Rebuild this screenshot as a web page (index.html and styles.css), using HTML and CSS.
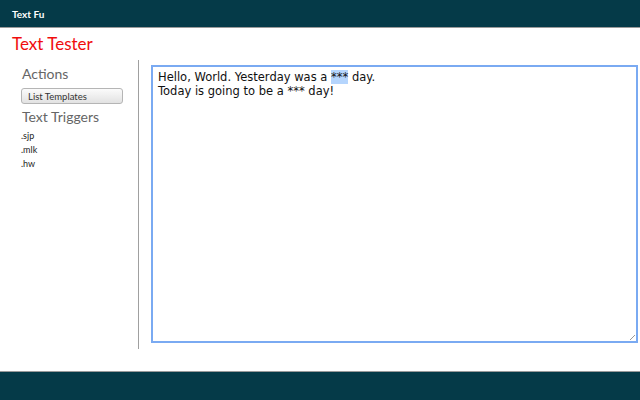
FILE: index.html
```html
<!DOCTYPE html>
<html>
<head>
<meta charset="utf-8">
<title>Text Fu</title>
<link rel="stylesheet" href="styles.css">
</head>
<body>
<div class="page">
  <header class="topbar"><span class="brand">Text Fu</span></header>
  <h1 class="title">Text Tester</h1>
  <div class="main">
    <aside class="sidebar">
      <h2 class="section">Actions</h2>
      <button class="btn">List Templates</button>
      <h2 class="section triggers">Text Triggers</h2>
      <ul class="trigger-list">
        <li>.sjp</li>
        <li>.mlk</li>
        <li>.hw</li>
      </ul>
    </aside>
    <div class="content">
      <div class="editor">Hello, World. Yesterday was a <span class="sel">***</span> day.<br>Today is going to be a *** day!<span class="grip"></span></div>
    </div>
  </div>
  <footer class="bottombar"></footer>
</div>
</body>
</html>
```

FILE: styles.css
```css
html, body {
  margin: 0;
  padding: 0;
  background: #fff;
}
.page {
  width: 640px;
  height: 400px;
  display: flex;
  flex-direction: column;
  overflow: hidden;
}
.topbar {
  height: 27px;
  background: #053a48;
  border-bottom: 1px solid #9a9a9a;
  display: flex;
  align-items: center;
  padding-left: 12px;
  box-sizing: content-box;
}
.brand {
  color: #fff;
  font-family: "Lato", "Open Sans", sans-serif;
  font-weight: bold;
  font-size: 10px;
}
.title {
  margin: 7px 0 0 12px;
  font-family: "Lato", "Open Sans", sans-serif;
  font-weight: normal;
  font-size: 17px;
  line-height: 18px;
  color: #f00d0d;
}
.main {
  flex: 1;
  display: flex;
  padding-top: 7px;
  padding-bottom: 22px;
}
.sidebar {
  width: 116px;
  padding-left: 22px;
  padding-top: 6px;
  border-right: 1px solid #a0a0a0;
  font-family: "Lato", "Open Sans", sans-serif;
}
.section {
  margin: 0;
  font-weight: normal;
  font-size: 14px;
  line-height: 16px;
  color: #666;
}
.triggers {
  margin-top: 5px;
}
.btn {
  display: block;
  margin: 6px 0 0 -1px;
  width: 102px;
  height: 16px;
  padding: 0 0 0 6px;
  text-align: left;
  font-family: "Lato", "Open Sans", sans-serif;
  font-size: 9.5px;
  color: #333;
  border: 1px solid #b5b5b5;
  border-radius: 3px;
  background: linear-gradient(#fbfbfb, #e2e2e2);
}
.trigger-list {
  list-style: none;
  margin: 4px 0 0 -1px;
  padding: 0;
  font-size: 9px;
  line-height: 14px;
  color: #222;
}
.content {
  flex: 1;
  padding: 5px 2px 6px 12px;
  display: flex;
}
.editor {
  position: relative;
  flex: 1;
  border: 2px solid #7aaaf2;
  padding: 3px 5px;
  font-family: "DejaVu Sans", sans-serif;
  font-size: 11.5px;
  line-height: 14px;
  color: #111;
}
.sel {
  background: #b5d5fd;
}
.grip {
  position: absolute;
  right: 1px;
  bottom: 1px;
  width: 5px;
  height: 5px;
  background: linear-gradient(135deg, transparent 45%, #999 45%, #999 55%, transparent 55%);
}
.bottombar {
  height: 28px;
  background: #053a48;
  border-top: 1px solid #9a9a9a;
}
```
